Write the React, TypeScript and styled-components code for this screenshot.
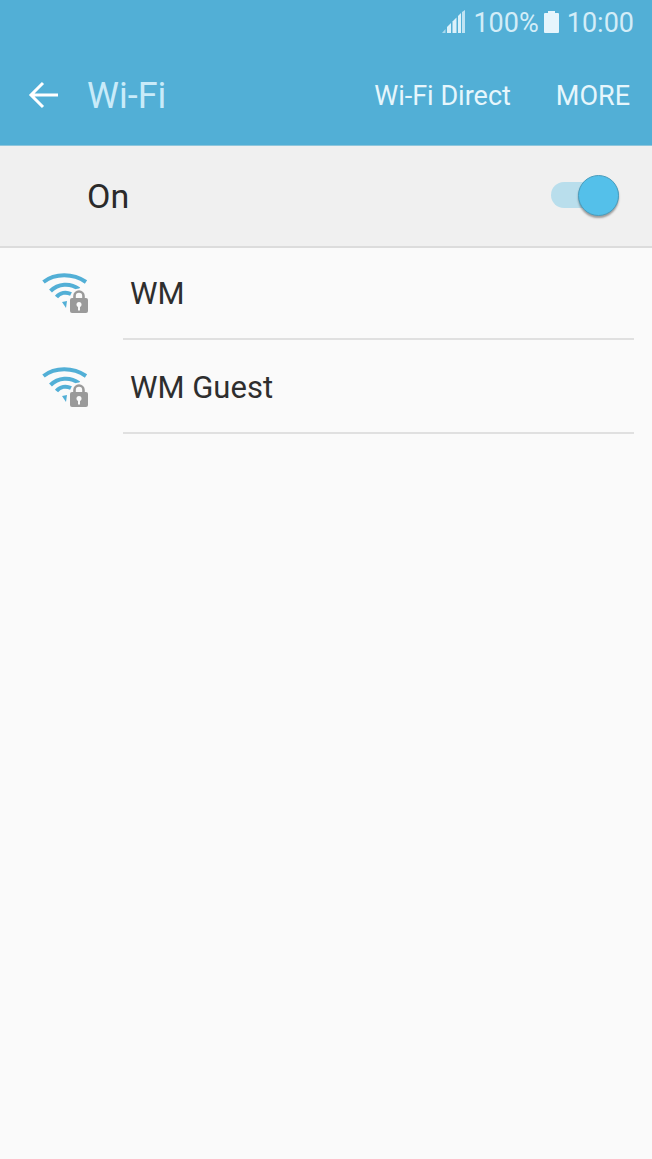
import React from 'react';
import styled, { createGlobalStyle } from 'styled-components';

const GlobalStyle = createGlobalStyle`
  html, body {
    margin: 0;
    padding: 0;
    height: 100%;
    background: #fafafa;
  }
  #root {
    height: 100%;
  }
`;

const Screen = styled.div`
  display: flex;
  flex-direction: column;
  width: 652px;
  height: 1159px;
  overflow: hidden;
  background: #fafafa;
  font-family: Roboto, "Liberation Sans", sans-serif;
`;

const Header = styled.header`
  height: 146px;
  box-sizing: border-box;
  background: #52afd6;
  border-bottom: 1px solid #8fc6dc;
`;

const StatusBar = styled.div`
  display: flex;
  align-items: center;
  justify-content: flex-end;
  height: 46px;
  padding-right: 18px;
  color: #d3edf8;
  font-size: 27px;
`;

const StatusText = styled.span<{ $gap: number }>`
  display: flex;
  align-items: center;
  margin-left: ${({ $gap }) => $gap}px;
  line-height: 46px;
`;

const StatusGlyph = styled.svg`
  display: block;
  margin-bottom: 3px;
`;

const ActionBar = styled.div`
  display: flex;
  align-items: center;
  height: 98px;
  padding: 0 22px 0 28px;
`;

const BackButton = styled.svg`
  width: 32px;
  height: 32px;
  flex-shrink: 0;
`;

const Title = styled.h1`
  flex: 1;
  margin: 0 0 0 27px;
  padding-top: 2px;
  color: #c9ebf9;
  font-size: 36px;
  font-weight: 400;
`;

const ActionLink = styled.span<{ $gap?: number }>`
  margin-left: ${({ $gap }) => $gap ?? 0}px;
  padding-top: 1px;
  color: #e6f6fc;
  font-size: 27px;
`;

const SwitchRow = styled.div`
  display: flex;
  align-items: center;
  justify-content: space-between;
  height: 102px;
  box-sizing: border-box;
  padding: 0 33px 0 87px;
  background: #f0f0f0;
  border-bottom: 2px solid #dcdcdc;
  color: #2a2a2a;
  font-size: 34px;
`;

const Switch = styled.div`
  position: relative;
  width: 68px;
  height: 26px;
  margin-bottom: 2px;
  border-radius: 13px;
  background: #b9deec;
`;

const Knob = styled.div`
  position: absolute;
  right: 0;
  top: -7px;
  width: 41px;
  height: 41px;
  box-sizing: border-box;
  border-radius: 50%;
  background: #54c0ea;
  border: 1px solid #4a9dbd;
  box-shadow: 0 2px 2px rgba(0, 0, 0, 0.35);
`;

const NetworkList = styled.ul`
  margin: -2px 0 0;
  padding: 0;
  list-style: none;
`;

const NetworkRow = styled.li`
  display: flex;
  height: 94px;
`;

const NetworkIconCell = styled.div`
  display: flex;
  align-items: center;
  width: 123px;
  box-sizing: border-box;
  padding-left: 41px;
  flex-shrink: 0;
`;

const NetworkName = styled.div`
  flex: 1;
  display: flex;
  align-items: center;
  margin-right: 18px;
  padding: 2px 0 0 7px;
  box-sizing: border-box;
  border-bottom: 2px solid #e0e0e0;
  color: #2e2e2e;
  font-size: 31px;
`;

const SignalIcon = () => (
  <StatusGlyph width="23" height="23" viewBox="0 0 23 23">
    <path d="M0 23l3.500-4v4z" fill="#a9d9ee" />
    <path d="M5 17l4-4v10H5z" fill="#dcf1fa" />
    <path d="M10.500 11.500l4-4V23h-4z" fill="#dcf1fa" />
    <path d="M16 6l3-3v20h-3z" fill="#dcf1fa" />
    <path d="M20 2l3-2v23h-3z" fill="#bfe3f3" />
  </StatusGlyph>
);

const BatteryIcon = () => (
  <StatusGlyph width="15" height="22" viewBox="0 0 15 22">
    <path d="M4 0h7v2h3a1 1 0 0 1 1 1v18a1 1 0 0 1-1 1H1a1 1 0 0 1-1-1V3a1 1 0 0 1 1-1h3z" fill="#e6f5fc" />
  </StatusGlyph>
);

const WifiLockIcon = () => (
  <svg width="50" height="44" viewBox="0 0 50 44">
    <g fill="none" stroke="#52afd6" strokeWidth="4">
      <path d="M2.500 11C14 2 32 2 45 11" />
      <path d="M9.500 20C17 12.500 29 11.500 38 18" />
      <path d="M15.500 26C19 21.500 25 20.500 30 23" />
    </g>
    <path d="M21 31L26 30 25 37z" fill="#52afd6" />
    <path d="M33.500 28v-3a4.500 4.500 0 0 1 9 0v3" fill="#fafafa" stroke="#fafafa" strokeWidth="6" />
    <path d="M33.500 28v-3a4.500 4.500 0 0 1 9 0v3" fill="none" stroke="#9a9a9a" strokeWidth="2.600" />
    <rect x="29" y="27" width="18" height="15" rx="2" fill="#9a9a9a" />
    <circle cx="38" cy="33.500" r="2.500" fill="#fafafa" />
    <rect x="37" y="34" width="2" height="5.500" fill="#fafafa" />
  </svg>
);

const networks = ['WM', 'WM Guest'];

const App = () => {
  return (
    <Screen>
      <GlobalStyle />
      <Header>
        <StatusBar>
          <SignalIcon />
          <StatusText $gap={8}>100%</StatusText>
          <StatusText $gap={5}>
            <BatteryIcon />
          </StatusText>
          <StatusText $gap={8}>10:00</StatusText>
        </StatusBar>
        <ActionBar>
          <BackButton viewBox="0 0 32 32">
            <path d="M30 16H3M15 4L3 16l12 12" fill="none" stroke="#fff" strokeWidth="3" />
          </BackButton>
          <Title>Wi-Fi</Title>
          <ActionLink>Wi-Fi Direct</ActionLink>
          <ActionLink $gap={45}>MORE</ActionLink>
        </ActionBar>
      </Header>
      <SwitchRow>
        On
        <Switch>
          <Knob />
        </Switch>
      </SwitchRow>
      <NetworkList>
        {networks.map((name) => (
          <NetworkRow key={name}>
            <NetworkIconCell>
              <WifiLockIcon />
            </NetworkIconCell>
            <NetworkName>{name}</NetworkName>
          </NetworkRow>
        ))}
      </NetworkList>
    </Screen>
  );
};

export default App;
